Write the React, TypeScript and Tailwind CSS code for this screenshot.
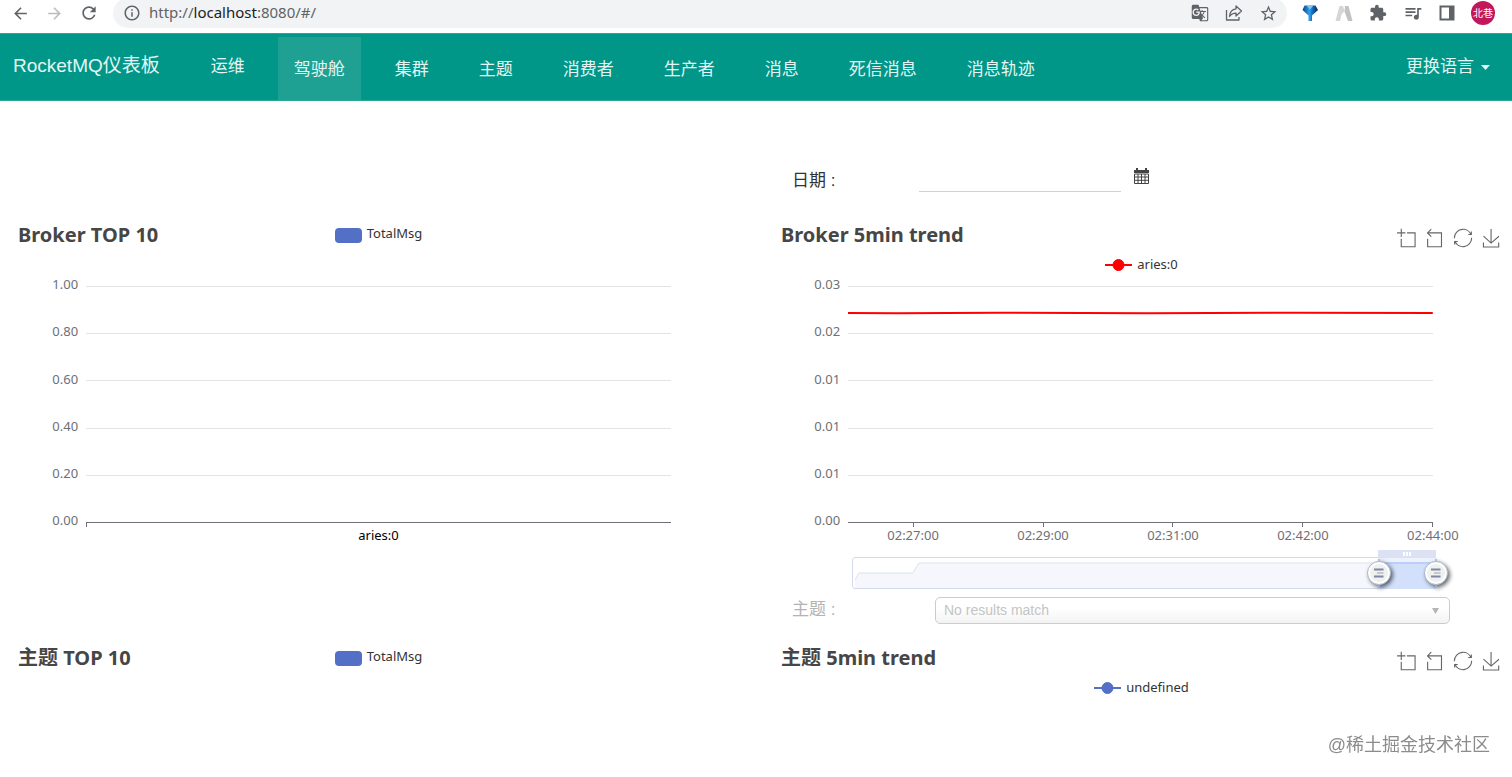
import React from "react";
import {
  MdArrowBack,
  MdArrowForward,
  MdExtension,
  MdGTranslate,
  MdInfoOutline,
  MdQueueMusic,
  MdRefresh,
  MdStarBorder,
} from "react-icons/md";

const NAV_ITEMS = ["驾驶舱", "集群", "主题", "消费者", "生产者", "消息", "死信消息", "消息轨迹"];

const SANS = "font-['Liberation_Sans','Noto_Sans_CJK_SC',sans-serif]";
const CHART = "font-['Noto_Sans','Noto_Sans_CJK_SC',sans-serif]";

function BrowserBar() {
  return (
    <div className="flex h-[33px] items-start overflow-hidden bg-white text-[#5f6368]">
      <div className="flex h-[26px] w-[113px] shrink-0 items-center gap-[15px] pl-[11px]">
        <button aria-label="Back"><MdArrowBack size={19} /></button>
        <button aria-label="Forward" className="text-[#babcbe]"><MdArrowForward size={19} /></button>
        <button aria-label="Reload"><MdRefresh size={20} /></button>
      </div>
      <div className="-mt-0.5 flex h-[30px] flex-1 items-center rounded-full bg-[#f1f3f4] pl-[10px] pr-[9px]">
        <MdInfoOutline size={18} />
        <div className={`flex-1 pb-0.5 pl-2 text-[15px] leading-[26px] text-[#5f6368] ${CHART}`}>
          http://<span className="text-[#202124]">localhost</span>:8080/#/
        </div>
        <div className="flex items-center gap-4">
          <button aria-label="Translate"><MdGTranslate size={18} /></button>
          <button aria-label="Share">
            <svg width="18" height="18" viewBox="0 0 18 18" fill="none" stroke="currentColor" strokeWidth="1.3" strokeLinejoin="round">
              <path d="M1.500 6V16H14V13" />
              <path d="M11 2L16.500 7L11 12V9.200C8 9.200 6 10.200 4.500 12.500C4.800 8.500 7 5.200 11 4.800Z" />
            </svg>
          </button>
          <button aria-label="Bookmark"><MdStarBorder size={19} /></button>
        </div>
      </div>
      <div className="flex h-[26px] shrink-0 items-center gap-4 pl-[14px] pr-[17px]">
        <button aria-label="Blue extension">
          <svg width="18" height="18" viewBox="0 0 18 18">
            <defs>
              <linearGradient id="gem" x1="0" x2="1">
                <stop offset="0" stopColor="#0d3f86" />
                <stop offset="0.45" stopColor="#2f9fe8" />
                <stop offset="0.6" stopColor="#1b74cc" />
                <stop offset="1" stopColor="#0a2450" />
              </linearGradient>
            </defs>
            <path d="M3.500 1.500H14.500L17 6L11 11.500V17H7.500V11.500L1.500 6Z" fill="url(#gem)" />
            <path d="M5.500 1.500H12.500L9 5.500Z" fill="#7cc8f5" />
          </svg>
        </button>
        <button aria-label="Grey extension">
          <svg width="18" height="18" viewBox="0 0 18 18">
            <path d="M4.500 2H8L9.500 7L6.500 10.500L5 17H0.500Z" fill="#d5d6d7" />
            <path d="M10 2H13.500L17.500 17H13L9.500 7.500Z" fill="#c0c2c4" />
          </svg>
        </button>
        <button aria-label="Extensions"><MdExtension size={18} /></button>
        <button aria-label="Media"><MdQueueMusic size={20} /></button>
        <button aria-label="Side panel">
          <svg width="16" height="16" viewBox="0 0 16 16" fill="none" stroke="currentColor" strokeWidth="2">
            <path d="M1.500 1.500H14.500V14.500H1.500Z" />
            <path d="M12 1.500V14.500" strokeWidth="4" />
          </svg>
        </button>
        <button className={`flex size-6 items-center justify-center rounded-full bg-[#c2185b] text-[10px] text-white ${SANS}`}>
          北巷
        </button>
      </div>
    </div>
  );
}

function NavBar() {
  return (
    <nav className={`flex h-[68px] items-stretch border-y border-[#2ba698] bg-[#009688] text-[17px] text-[#e4f5f3] ${SANS}`}>
      <a href="#/" className="pl-[13px] text-[19px] leading-[64px]">RocketMQ仪表板</a>
      <a href="#/ops" className="ml-[35px] px-4 leading-[66px]">运维</a>
      <ul className="ml-[17px] flex flex-1 gap-[18px] pt-[3px]">
        {NAV_ITEMS.map((name, i) => (
          <li key={name} className={i === 0 ? "bg-[#1ea193]" : ""}>
            <a href={`#/${i}`} className="block px-4 leading-[66px]">{name}</a>
          </li>
        ))}
      </ul>
      <button className="flex items-center gap-[7px] self-start pr-[22px] leading-[66px]">
        更换语言
        <svg width="9" height="5" viewBox="0 0 9 5"><path d="M0 0H9L4.500 5Z" fill="currentColor" /></svg>
      </button>
    </nav>
  );
}

const TOOLS = [
  { label: "Zoom", box: "3 1 58 58", d: "M0,13.5h26.9 M13.5,26.9V0 M32.1,13.5H58V58H13.5 V32.1" },
  { label: "Zoom reset", box: "5 1 58 58", d: "M22,1.4L9.9,13.5l12.3,12.3 M10.3,13.5H54.9v44.6 H10.3v-26" },
  {
    label: "Restore",
    box: "1 1 58 58",
    d: "M47,18.9h9.8V8.7 M56.3,20.1 C52.1,9,40.5,0.6,26.8,2.1C12.6,3.7,1.6,16.2,2.1,30.6 M13,41.1H3.1v10.2 M3.7,39.9c4.2,11.1,15.8,19.5,29.5,18 c14.2-1.6,25.2-14.1,24.7-28.5",
  },
  { label: "Save as image", box: "0 0 58 58", d: "M4.7,22.9L29.3,45.5L54.7,23.4M4.6,43.6L4.6,58L53.8,58L53.8,43.6M29.2,45.1L29.2,0" },
];

function Toolbox() {
  return (
    <div className="flex gap-2.5 pt-[7px]">
      {TOOLS.map((t) => (
        <button key={t.label} aria-label={t.label}>
          <svg width="18" height="18" viewBox={t.box} className="overflow-visible" fill="none" stroke="#666" strokeWidth="3.6">
            <path d={t.d} />
          </svg>
        </button>
      ))}
    </div>
  );
}

function ChartTitle({ children }: { children: React.ReactNode }) {
  return <h2 className="text-[20px] font-bold leading-[26px] text-[#464646]">{children}</h2>;
}

function BarHeader({ title }: { title: string }) {
  return (
    <div className="grid grid-cols-[1fr_auto_1fr] items-start px-[5px]">
      <ChartTitle>{title}</ChartTitle>
      <div className="flex items-center gap-[5px] text-[13px] leading-[22px] text-[#333]">
        <span className="mt-1 h-[15px] w-[27px] rounded bg-[#5470c6]" />
        TotalMsg
      </div>
    </div>
  );
}

function TrendHeader({ title, series, color }: { title: string; series: string; color: string }) {
  return (
    <div>
      <div className="flex h-[30px] items-start justify-between px-1.5">
        <ChartTitle>{title}</ChartTitle>
        <Toolbox />
      </div>
      <div className="flex items-center justify-center gap-[5px] pl-0.5 text-[13px] leading-[24px] text-[#333]">
        <svg width="27" height="14" viewBox="0 0 27 14" className="mt-0.5" stroke={color} fill={color}>
          <path d="M0 7H27" strokeWidth="2" />
          <circle cx="13.500" cy="7" r="5.500" />
        </svg>
        {series}
      </div>
    </div>
  );
}

function Plot({ ticks, children }: { ticks: string[]; children?: React.ReactNode }) {
  return (
    <div className="relative grid h-[283px] auto-rows-fr text-[13px] text-[#6e7079]">
      {ticks.map((t, i) => (
        <div key={i} className="flex items-center">
          <span className="w-[10%] pb-[3px] pr-2 text-right">{t}</span>
          <span className={i === ticks.length - 1 ? "h-px w-[80%] bg-[#6e7079]" : "h-px w-[80%] bg-[#e2e4e6]"} />
        </div>
      ))}
      {children}
    </div>
  );
}

function Handle() {
  return (
    <svg width="34" height="34" viewBox="0 0 34 34" className="drop-shadow-[2px_2px_2px_rgba(0,0,0,0.6)]">
      <path d="M17 3V31" stroke="#a7b7cc" strokeWidth="1.500" />
      <circle cx="17" cy="17" r="11.500" fill="#fff" stroke="#a7b7cc" strokeWidth="1" />
      <circle cx="17" cy="17" r="9" fill="#eef1ee" />
      <path d="M12 13.500H21.500M12 20.500H21.500" stroke="#7f86a8" strokeWidth="1.800" />
      <path d="M15 17H21.500" stroke="#b3b8bb" strokeWidth="1.400" />
    </svg>
  );
}

function DataZoom() {
  return (
    <div className="relative ml-[77px] h-8 w-[80%] rounded-[3px] border border-[#d2dbee]">
      <svg className="h-full w-full" viewBox="0 0 584 30" preserveAspectRatio="none" aria-hidden="true">
        <path d="M2 30V22L6 15H60L66 5H584V30Z" fill="#f5f7fc" />
        <path d="M2 22L6 15H60L66 5H584" fill="none" stroke="#dbe2f0" />
      </svg>
      <div className="absolute -top-2 right-0 h-[39px] w-[10%]">
        <div className="flex h-2 items-center justify-center gap-px bg-[#dce2f3]">
          <span className="h-1 w-0.5 bg-white" />
          <span className="h-1 w-0.5 bg-white" />
          <span className="h-1 w-0.5 bg-white" />
        </div>
        <div className="h-1 bg-[#edf1fb]" />
        <div className="h-[27px] border-t-2 border-[#bccff8] bg-[#d3e0fb]" />
        <div className="absolute -left-4 top-1.5"><Handle /></div>
        <div className="absolute -right-[17px] top-1.5"><Handle /></div>
      </div>
      <input type="range" aria-label="Time window" defaultValue={90} className="absolute inset-0 h-full w-full cursor-pointer opacity-0" />
    </div>
  );
}

const TREND_TIMES = ["02:27:00", "02:29:00", "02:31:00", "02:42:00", "02:44:00"];

export default function App() {
  return (
    <div className="min-h-screen bg-white">
      <BrowserBar />
      <NavBar />
      <main className={`grid grid-cols-2 gap-x-[31px] pl-[13px] pr-1.5 ${CHART}`}>
        <div className={`col-start-2 flex items-start pb-[27px] pl-[17px] pt-[66px] text-[17px] text-[#333] ${SANS}`}>
          <label htmlFor="date" className="w-[127px] leading-[28px]">日期 :</label>
          <input id="date" type="text" className="h-[25px] w-[202px] border-b border-[#d2d2d2] outline-none" />
          <button aria-label="Pick a date" className="ml-[13px] mt-px">
            <svg width="15" height="16" viewBox="0 0 15 16">
              <path d="M0 2H2V0H4V2H11V0H13V2H15V5H0Z" fill="#444" />
              <path d="M0.500 6H14.500V15.500H0.500Z M0.500 9H14.500 M0.500 12.300H14.500 M4 6V15.500 M7.500 6V15.500 M11 6V15.500" fill="none" stroke="#444" />
            </svg>
          </button>
        </div>

        <section className="col-start-1">
          <BarHeader title="Broker TOP 10" />
          <div className="mt-[15px]">
            <Plot ticks={["1.00", "0.80", "0.60", "0.40", "0.20", "0.00"]} />
          </div>
          <div className="-mt-6 ml-[10%] w-[80%] text-center text-[13px] leading-4 text-black">
            <div className="h-[5px] w-px bg-[#6e7079]" />
            aries:0
          </div>
        </section>

        <section>
          <TrendHeader title="Broker 5min trend" series="aries:0" color="#ff0000" />
          <div className="-mt-[13px]">
            <Plot ticks={["0.03", "0.02", "0.01", "0.01", "0.01", "0.00"]}>
              <svg className="absolute left-[10%] top-[47px] h-1.5 w-[80%]" viewBox="0 0 585 6" preserveAspectRatio="none">
                <path d="M0 3L50 3.300L150 2.800L300 3.200L450 2.800L585 3" fill="none" stroke="#ff0000" strokeWidth="2" />
              </svg>
            </Plot>
          </div>
          <div className="-mt-6 ml-[10%] grid h-[35px] w-[88.889%] grid-cols-5 text-center text-[13px] leading-4 text-[#6e7079]">
            {TREND_TIMES.map((t) => (
              <div key={t}>
                <div className="mx-auto h-[5px] w-px bg-[#6e7079]" />
                {t}
              </div>
            ))}
          </div>
          <DataZoom />
        </section>

        <div className={`col-start-2 flex items-start pb-[21px] pl-[17px] pr-14 pt-2 ${SANS}`}>
          <label htmlFor="topic" className="w-[143px] text-[17px] leading-[25px] text-[#b3b3b3]">主题 :</label>
          <div className="relative flex-1">
            <select
              id="topic"
              disabled
              className="h-[27px] w-full appearance-none rounded-[5px] border border-[#ccc] bg-linear-to-b from-white from-40% to-[#f3f3f3] pl-2 text-[14px] text-[#c4c4c4] opacity-100"
            >
              <option>No results match</option>
            </select>
            <svg width="7" height="6" viewBox="0 0 7 6" className="pointer-events-none absolute right-[11px] top-[11px]">
              <path d="M0 0H7L3.500 6Z" fill="#b5b5b5" />
            </svg>
          </div>
        </div>

        <section className="col-start-1"><BarHeader title="主题 TOP 10" /></section>
        <section><TrendHeader title="主题 5min trend" series="undefined" color="#5470c6" /></section>
      </main>
      <p className={`fixed bottom-[19px] right-[22px] text-[18px] leading-[26px] text-[#8c8c8c] ${SANS}`}>@稀土掘金技术社区</p>
    </div>
  );
}
